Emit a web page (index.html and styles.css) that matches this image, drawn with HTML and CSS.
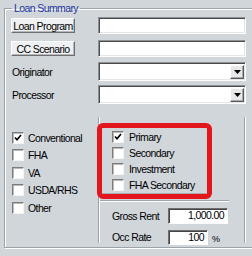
FILE: index.html
```html
<!DOCTYPE html>
<html lang="en">
<head>
    <meta charset="UTF-8">
    <meta name="viewport" content="width=device-width, initial-scale=1.0">
    <title>Loan Summary</title>
    <link rel="stylesheet" href="styles.css">
</head>
<body>
    <fieldset class="summary">
        <legend>Loan Summary</legend>

        <div class="row">
            <div class="cell"><button class="btn">Loan Program</button></div>
            <div class="field"></div>
        </div>
        <div class="row">
            <div class="cell"><button class="btn">CC Scenario</button></div>
            <div class="field"></div>
        </div>
        <div class="row">
            <div class="cell label">Originator</div>
            <div class="field combo"><span class="drop"><svg width="7" height="4" viewBox="0 0 7 4"><path d="M0 0h7L3.5 4z" fill="#000"/></svg></span></div>
        </div>
        <div class="row">
            <div class="cell label">Processor</div>
            <div class="field combo"><span class="drop"><svg width="7" height="4" viewBox="0 0 7 4"><path d="M0 0h7L3.5 4z" fill="#000"/></svg></span></div>
        </div>

        <div class="lower">
            <div class="types">
                <div class="check"><span class="box"><svg width="10" height="10" viewBox="0 0 10 10"><path d="M2 4.5l2 2.2L8 2" fill="none" stroke="#000" stroke-width="1.7"/></svg></span>Conventional</div>
                <div class="check"><span class="box"></span>FHA</div>
                <div class="check"><span class="box"></span>VA</div>
                <div class="check"><span class="box"></span>USDA/RHS</div>
                <div class="check"><span class="box"></span>Other</div>
            </div>

            <div class="panel">
                <div class="occupancy">
                    <div class="occ-list">
                        <div class="check"><span class="box"><svg width="10" height="10" viewBox="0 0 10 10"><path d="M2 4.5l2 2.2L8 2" fill="none" stroke="#000" stroke-width="1.7"/></svg></span>Primary</div>
                        <div class="check"><span class="box"></span>Secondary</div>
                        <div class="check"><span class="box"></span>Investment</div>
                        <div class="check"><span class="box"></span>FHA Secondary</div>
                    </div>
                </div>

                <div class="rent">
                    <div class="rent-row">
                        <span class="rent-label">Gross Rent</span>
                        <span class="num wide">1,000.00</span>
                    </div>
                    <div class="rent-row">
                        <span class="rent-label">Occ Rate</span>
                        <span class="num short">100</span>
                        <span class="unit">%</span>
                    </div>
                </div>
            </div>
        </div>
    </fieldset>
</body>
</html>
```

FILE: styles.css
```css
body {
    margin: 0;
    padding-top: 2px;
    width: 252px;
    height: 256px;
    overflow: hidden;
    background-color: #d1d6db;
    font-family: "Liberation Sans", Arial, sans-serif;
    font-size: 10.5px;
    letter-spacing: -0.6px;
    color: #000;
}
.summary {
    margin: 0 0 0 4px;
    padding: 0 0 4px 0;
    width: 260px;
    box-sizing: border-box;
    border: 1px solid #9ea3a8;
    box-shadow: inset 1px 1px 0 #fff, 1px 1px 0 #fff;
    min-width: 0;
}
.summary legend {
    margin-left: 7px;
    padding: 0 2px;
    line-height: 12px;
    color: #23359e;
}
.row {
    display: flex;
    align-items: center;
    height: 23px;
}
.cell {
    width: 93px;
    padding-left: 6px;
    box-sizing: border-box;
    white-space: nowrap;
}
.label {
    padding-left: 7px;
}
.btn {
    font: inherit;
    letter-spacing: inherit;
    white-space: nowrap;
    width: 64px;
    height: 15px;
    padding: 0;
    background-color: #eef0f2;
    border: 1px solid;
    border-color: #fff #6e6e6e #6e6e6e #fff;
    box-shadow: inset -1px -1px 0 #b4b8bc;
    line-height: 12px;
}
.field {
    width: 148px;
    height: 17px;
    box-sizing: border-box;
    background-color: #fff;
    border: 1px solid;
    border-color: #8e9296 #fdfdfd #fdfdfd #8e9296;
    box-shadow: inset 1px 1px 0 #4a4a4a, inset -1px -1px 0 #e4e6e8;
}
.combo {
    height: 19px;
    display: flex;
    align-items: center;
    justify-content: flex-end;
    padding-right: 1px;
}
.drop {
    width: 14px;
    height: 14px;
    box-sizing: border-box;
    display: flex;
    align-items: center;
    justify-content: center;
    background-color: #e6e8ea;
    border: 1px solid;
    border-color: #fff #5a5a5a #5a5a5a #fff;
    box-shadow: inset -1px -1px 0 #a4a8ac;
}
.lower {
    display: flex;
    margin-top: 11px;
    height: 126px;
}
.types {
    width: 93px;
    padding: 12px 0 0 7px;
    box-sizing: border-box;
    white-space: nowrap;
}
.check {
    display: flex;
    align-items: center;
    height: 17.5px;
}
.box {
    width: 12px;
    height: 12px;
    box-sizing: border-box;
    margin-right: 4px;
    display: flex;
    align-items: center;
    justify-content: center;
    background-color: #fff;
    border: 1px solid;
    border-color: #7c7c7c #f4f4f4 #f4f4f4 #7c7c7c;
    box-shadow: inset 1px 1px 0 #b8b8b8;
}
.panel {
    width: 147px;
    box-sizing: border-box;
    border-left: 1px solid #9ea3a8;
    border-right: 1px solid #9ea3a8;
    box-shadow: inset 1px 0 0 #fff, 1px 0 0 #fff;
    white-space: nowrap;
}
.occupancy {
    margin: 6px 0 0 -2px;
    width: 115px;
    box-sizing: border-box;
    border: 5px solid #e4161d;
    border-radius: 6px;
}
.occ-list {
    padding: 1px 0 0 10px;
    border-bottom: 1px solid #a6aaae;
}
.occ-list .check {
    height: 16px;
}
.occ-list .box {
    margin-right: 5px;
}
.rent {
    margin: 1px 0 0 1px;
    width: 129px;
    border-top: 1px solid #9ea3a8;
    box-shadow: inset 0 1px 0 #fff;
    padding: 7px 0 0 12px;
    box-sizing: border-box;
}
.rent-row {
    display: flex;
    align-items: center;
    height: 16px;
    margin-bottom: 5px;
}
.rent-label {
    width: 56px;
}
.num {
    height: 15px;
    box-sizing: border-box;
    padding-right: 3px;
    text-align: right;
    line-height: 13px;
    background-color: #fff;
    border: 1px solid;
    border-color: #6e6e6e #fdfdfd #fdfdfd #6e6e6e;
    box-shadow: inset 1px 1px 0 #444;
}
.wide {
    width: 60px;
    height: 16px;
}
.short {
    width: 40px;
}
.unit {
    margin: 3px 0 0 4px;
    font-size: 9px;
}
```
